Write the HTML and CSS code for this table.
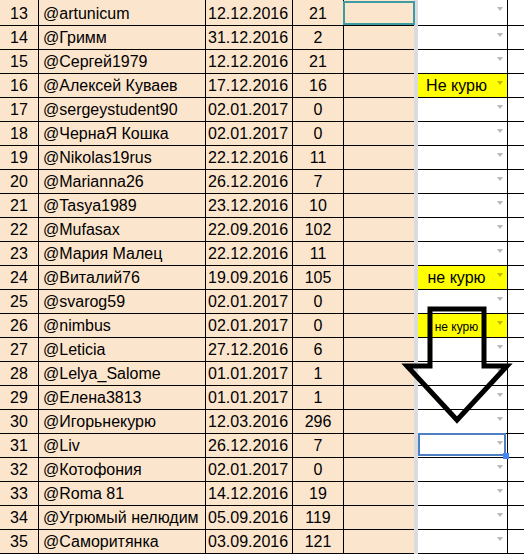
FILE: index.html
```html
<!DOCTYPE html>
<html>
<head>
<meta charset="utf-8">
<link rel="stylesheet" href="styles.css">
</head>
<body>
<div class="sheet" id="sheet"></div>
<svg class="bigarrow" width="524" height="555" viewBox="0 0 524 555">
  <polygon points="430,309 484,309 484,366 507,366 457,420 407,366 430,366" fill="none" stroke="#000" stroke-width="5" stroke-linejoin="miter" stroke-miterlimit="10"/>
</svg>
<script src="app.js"></script>
</body>
</html>
```
FILE: app.js
```js
const rows = [
  [13, "@artunicum", "12.12.2016", "21"],
  [14, "@Гримм", "31.12.2016", "2"],
  [15, "@Сергей1979", "12.12.2016", "21"],
  [16, "@Алексей Куваев", "17.12.2016", "16", "Не курю", "big"],
  [17, "@sergeystudent90", "02.01.2017", "0"],
  [18, "@ЧернаЯ Кошка", "02.01.2017", "0"],
  [19, "@Nikolas19rus", "22.12.2016", "11"],
  [20, "@Marianna26", "26.12.2016", "7"],
  [21, "@Tasya1989", "23.12.2016", "10"],
  [22, "@Mufasax", "22.09.2016", "102"],
  [23, "@Мария Малец", "22.12.2016", "11"],
  [24, "@Виталий76", "19.09.2016", "105", "не курю", "big"],
  [25, "@svarog59", "02.01.2017", "0"],
  [26, "@nimbus", "02.01.2017", "0", "не курю", "small"],
  [27, "@Leticia", "27.12.2016", "6"],
  [28, "@Lelya_Salome", "01.01.2017", "1"],
  [29, "@Елена3813", "01.01.2017", "1"],
  [30, "@Игорьнекурю", "12.03.2016", "296"],
  [31, "@Liv", "26.12.2016", "7"],
  [32, "@Котофония", "02.01.2017", "0"],
  [33, "@Roma 81", "14.12.2016", "19"],
  [34, "@Угрюмый нелюдим", "05.09.2016", "119"],
  [35, "@Саморитянка", "03.09.2016", "121"]
];
const sheet = document.getElementById("sheet");
function cell(cls, text) {
  const d = document.createElement("div");
  d.className = "c " + cls;
  if (text !== undefined) {
    const s = document.createElement("span");
    s.textContent = text;
    d.appendChild(s);
  }
  sheet.appendChild(d);
  return d;
}
rows.forEach(r => {
  cell("num", String(r[0]));
  cell("name", r[1]);
  cell("date", r[2]);
  cell("cnt", r[3]);
  const e = cell("empty");
  if (r[0] === 13) e.classList.add("teal");
  cell("strip");
  const dd = r[4] ? cell("dd yellow " + r[5], r[4]) : cell("dd");
  const ar = document.createElement("i");
  ar.className = "arr";
  dd.appendChild(ar);
  if (r[0] === 31) {
    dd.classList.add("sel");
    const h = document.createElement("b");
    h.className = "handle";
    dd.appendChild(h);
  }
  cell("last");
});
```
FILE: styles.css
```css
html, body {
  margin: 0;
  padding: 0;
  background: #fff;
}
body {
  width: 524px;
  height: 555px;
  overflow: hidden;
  position: relative;
  font-family: "Liberation Sans", Arial, sans-serif;
  font-size: 16px;
  color: #000;
}
.sheet {
  display: grid;
  grid-template-columns: 39px 167px 87px 51px 70px 4px 90px 1fr;
  grid-template-rows: 26px;
  grid-auto-rows: 24px;
}
.c {
  box-sizing: border-box;
  border-bottom: 1px solid #000;
  display: flex;
  align-items: flex-end;
  line-height: 23px;
  white-space: nowrap;
  position: relative;
}
.num, .name, .date, .cnt, .empty {
  background: #fce5cd;
}
.num, .name, .date, .cnt {
  border-right: 1px solid #000;
}
.num, .cnt {
  justify-content: center;
}
.name {
  padding-left: 4px;
}
.date {
  padding-left: 2px;
}
.strip {
  background: #d9dbe1;
  border-bottom: none;
}
.dd {
  border-right: 1px solid #000;
  justify-content: center;
  padding-right: 12px;
}
.yellow {
  background: #ffff00;
}
.small span {
  font-size: 12px;
  line-height: 19px;
}
.arr {
  position: absolute;
  top: 7px;
  right: 4px;
  width: 0;
  height: 0;
  border-left: 3px solid transparent;
  border-right: 3px solid transparent;
  border-top: 4px solid rgba(0, 0, 0, 0.28);
}
.teal {
  z-index: 2;
}
.teal::after {
  content: "";
  position: absolute;
  left: -1px;
  right: -1px;
  top: 1px;
  bottom: 0;
  border: 2px solid #3d9ba3;
}
.sel {
  z-index: 2;
}
.sel::after {
  content: "";
  position: absolute;
  left: 0;
  right: 1px;
  top: -1px;
  bottom: 1px;
  border: 2px solid #4f7fc3;
}
.handle {
  position: absolute;
  right: -2px;
  bottom: -2px;
  width: 6px;
  height: 6px;
  background: #4285f4;
  z-index: 3;
}
.bigarrow {
  position: absolute;
  left: 0;
  top: 0;
  z-index: 5;
  pointer-events: none;
}
```
